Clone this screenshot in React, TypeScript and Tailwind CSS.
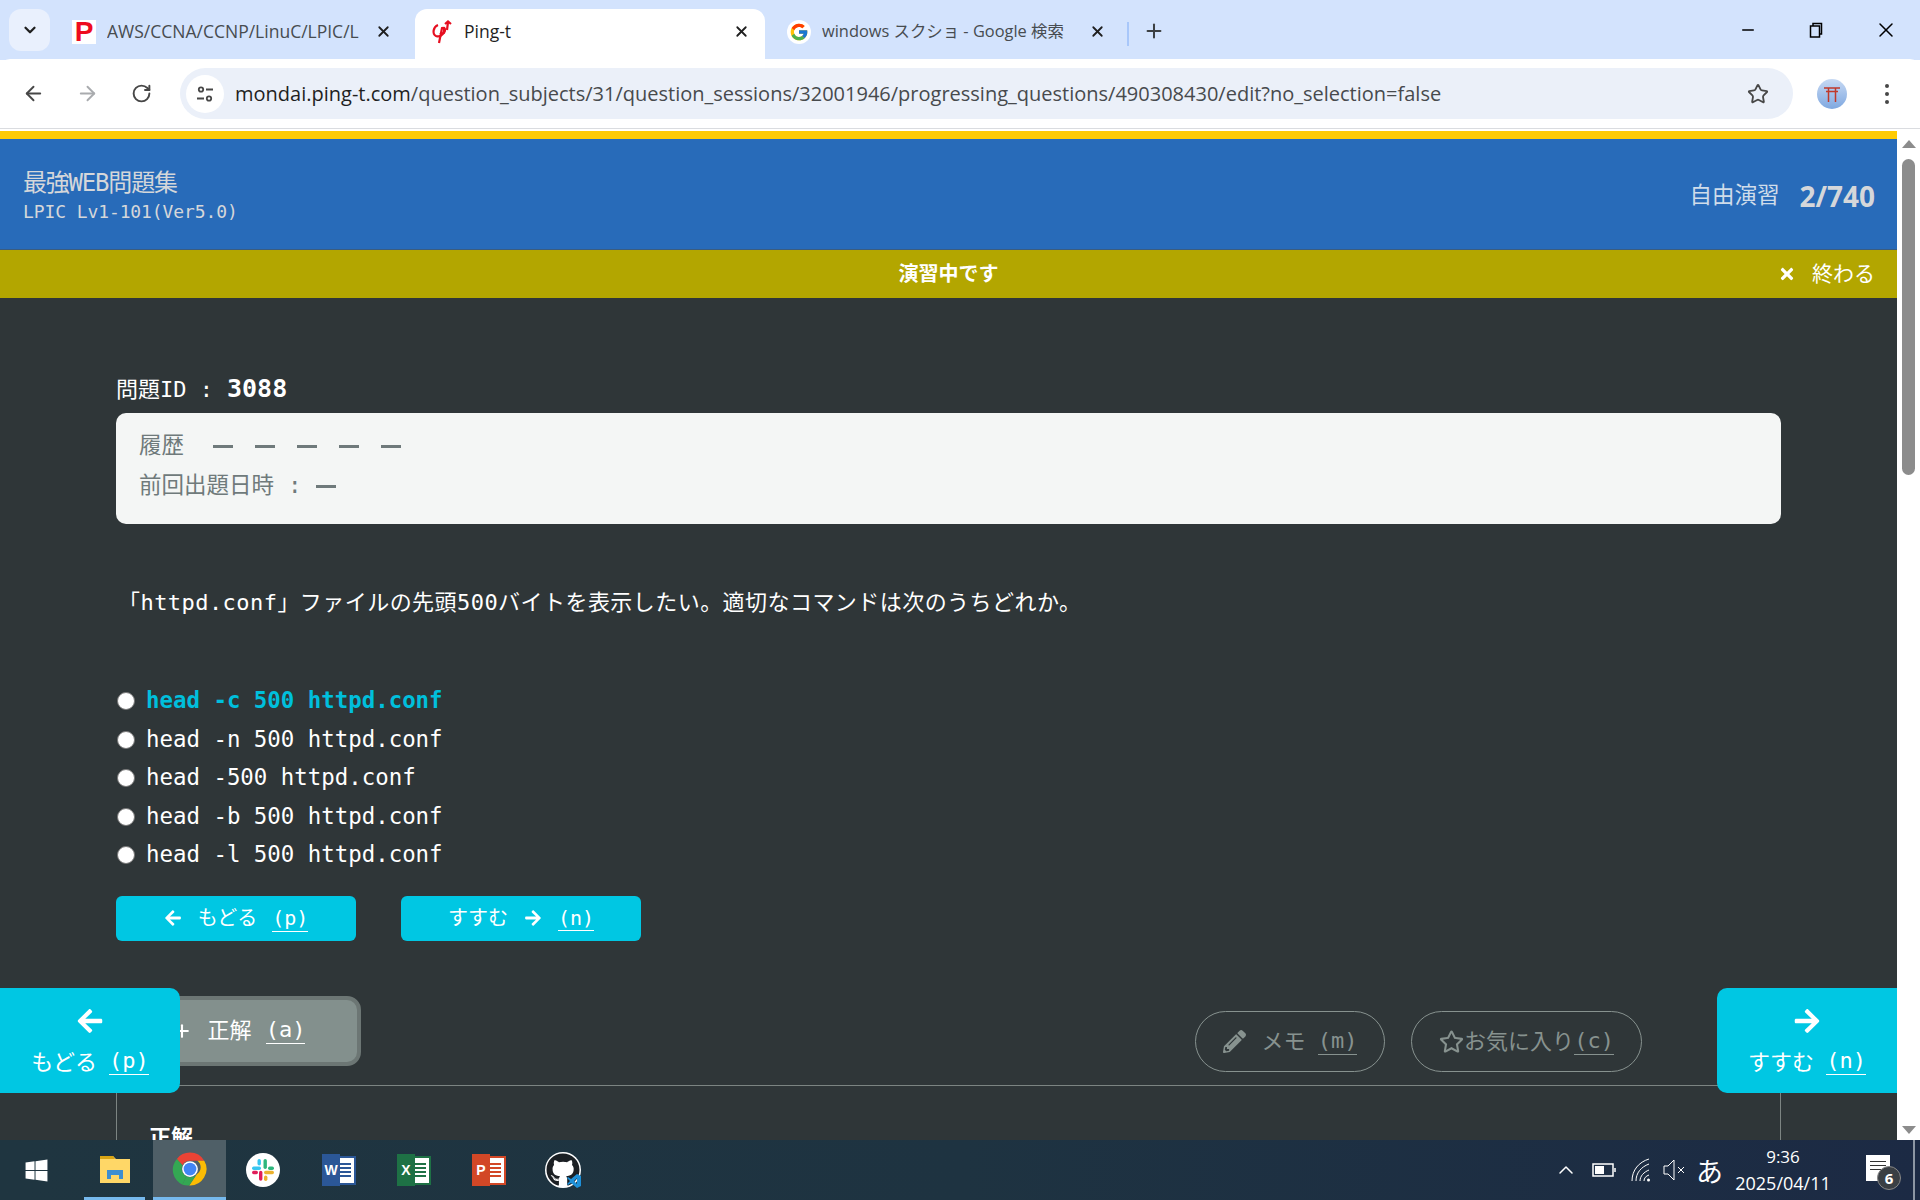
import { ArrowLeft, ArrowRight, ChevronDown, ChevronUp, Minus, Plus, RotateCw, Star, X } from 'lucide-react';
import { FaArrowLeft, FaArrowRight, FaGithub, FaPencilAlt, FaRegStar, FaTimes, FaWindows } from 'react-icons/fa';
import { FcGoogle } from 'react-icons/fc';

const ui = 'font-["Open_Sans","Noto_Sans_CJK_JP",sans-serif]';
const mono = 'font-["DejaVu_Sans_Mono","Noto_Sans_CJK_JP",monospace]';

const options = [
  'head -c 500 httpd.conf',
  'head -n 500 httpd.conf',
  'head -500 httpd.conf',
  'head -b 500 httpd.conf',
  'head -l 500 httpd.conf',
];

function ChromeLogo() {
  return (
    <svg viewBox="0 0 48 48" className="h-[36px] w-[36px]">
      <path d="M24 2a22 22 0 0 1 19 11H24a11 11 0 0 0-10 6L6.500 10.500A22 22 0 0 1 24 2z" fill="#ea4335" />
      <path d="M6.500 10.500 14 19a11 11 0 0 0 5 14.500L14 45A22 22 0 0 1 6.500 10.500z" fill="#34a853" transform="rotate(0 24 24)" />
      <path d="M43 13a22 22 0 0 1-20 33l10-15a11 11 0 0 0 1-18z" fill="#fbbc04" />
      <path d="M14 45l5-11.500a11 11 0 0 0 14-2.500L23 46a22 22 0 0 1-9-1z" fill="#34a853" />
      <circle cx="24" cy="24" r="10.500" fill="#fff" />
      <circle cx="24" cy="24" r="8.500" fill="#4285f4" />
    </svg>
  );
}

function SlackLogo() {
  return (
    <div className="flex h-[34px] w-[34px] items-center justify-center rounded-full bg-white">
      <svg viewBox="0 0 24 24" className="h-[24px] w-[24px]">
        <rect x="1" y="8.500" width="9" height="3.400" rx="1.700" fill="#36c5f0" />
        <rect x="6.500" y="1" width="3.400" height="6.500" rx="1.700" fill="#36c5f0" />
        <rect x="12.500" y="1" width="3.400" height="10" rx="1.700" fill="#2eb67d" />
        <rect x="17" y="8.500" width="6" height="3.400" rx="1.700" fill="#2eb67d" />
        <rect x="13" y="12.800" width="10" height="3.400" rx="1.700" fill="#ecb22e" />
        <rect x="13" y="17.500" width="3.400" height="5.500" rx="1.700" fill="#ecb22e" />
        <rect x="1" y="12.800" width="6" height="3.400" rx="1.700" fill="#e01e5a" />
        <rect x="8" y="12.800" width="3.400" height="10" rx="1.700" fill="#e01e5a" />
      </svg>
    </div>
  );
}

function OfficeIcon({ letter, color }: { letter: string; color: string }) {
  return (
    <div className="relative flex h-[32px] w-[32px] items-center">
      <div className="ml-auto flex h-[25px] w-[22px] flex-col justify-center gap-[2px] bg-white px-[3px]" style={{ outline: `2px solid ${color}` }}>
        <div className="h-[2px]" style={{ background: color }} />
        <div className="h-[2px]" style={{ background: color }} />
        <div className="h-[2px]" style={{ background: color }} />
        <div className="h-[2px]" style={{ background: color }} />
      </div>
      <div
        className="absolute top-0 left-0 flex h-[32px] w-[18px] items-center justify-center text-[14px] font-bold text-white font-['Liberation_Sans',sans-serif]"
        style={{ background: color }}
      >
        {letter}
      </div>
    </div>
  );
}

function Tab({ icon, title, width, text, active }: { icon: React.ReactNode; title: string; width: string; text: string; active?: boolean }) {
  return (
    <div className={`flex h-[51px] shrink-0 items-center pb-[6px] pl-[14px] ${width} ${active ? 'rounded-t-[12px] bg-white' : ''}`}>
      <div className="flex h-[24px] w-[24px] shrink-0 items-center justify-center">{icon}</div>
      <span className={`ml-[11px] min-w-0 flex-1 overflow-hidden whitespace-nowrap ${text} ${active ? 'text-[#1f1f1f]' : 'text-[#474c50]'}`}>{title}</span>
      <X size={17} strokeWidth={2.500} className="ml-[8px] shrink-0 text-[#1f1f1f]" />
    </div>
  );
}

function KeyHint({ k }: { k: string }) {
  return <span className={`border-b border-current leading-[26px] ${mono}`}>({k})</span>;
}

function Floating({ side, children }: { side: 'left' | 'right'; children: React.ReactNode }) {
  return (
    <div
      className={`absolute top-[859px] flex h-[105px] w-[180px] flex-col items-center justify-center gap-[10px] bg-[#00c7e3] pt-[4px] text-[22px] text-white ${
        side === 'left' ? 'left-0 rounded-r-[10px]' : 'right-[23px] rounded-l-[10px]'
      }`}
    >
      {children}
    </div>
  );
}

export default function App() {
  return (
    <div className={`flex h-[1200px] w-[1920px] flex-col overflow-hidden bg-white ${ui}`}>
      {/* Browser tabs */}
      <div className="flex h-[60px] shrink-0 items-end bg-[#d3e3fd] pl-[9px]">
        <div className="mb-[9px] flex h-[42px] w-[41px] items-center justify-center rounded-[12px] bg-[#e9f0fd]">
          <ChevronDown size={18} strokeWidth={3} className="text-[#1f1f1f]" />
        </div>
        <Tab
          width="ml-[8px] w-[352px] pr-[18px]"
          text="text-[17.500px]"
          title="AWS/CCNA/CCNP/LinuC/LPIC/L"
          icon={<div className="flex h-[24px] w-[24px] items-center justify-center bg-white text-[28px] leading-none font-bold text-[#ee0b1e] font-['Liberation_Sans',sans-serif]">P</div>}
        />
        <Tab
          active
          width="ml-[5px] w-[350px] pr-[15px]"
          text="text-[17.500px]"
          title="Ping-t"
          icon={
            <svg viewBox="0 0 24 24" className="h-[24px] w-[24px]" fill="none" stroke="#e60f20" strokeWidth="2.200">
              <path d="M9 5C4 7 3 14 7 16c5 2 9-3 8-9" />
              <path d="M10 23 13 8c3-1 4 2 2 5-1 1-3 1-4 0" />
              <path d="M18 10 19 2M16 4l3-2.500L22 4" />
            </svg>
          }
        />
        <Tab
          width="ml-[8px] w-[348px] pr-[15px]"
          text="text-[16.400px]"
          title="windows スクショ - Google 検索"
          icon={<div className="flex h-[24px] w-[24px] items-center justify-center rounded-full bg-white"><FcGoogle size={20} /></div>}
        />
        <div className="mb-[14px] ml-[6px] h-[24px] w-[2px] self-end bg-[#a8c7fa]" />
        <Plus size={22} strokeWidth={2.200} className="mb-[18px] ml-[14px] text-[#3c4043]" />
        <div className="ml-auto mb-[18px] flex items-center">
          <Minus size={18} strokeWidth={2} className="mr-[51px] text-black" />
          <svg viewBox="0 0 16 16" className="mr-[50px] h-[16px] w-[16px]" fill="none" stroke="#000" strokeWidth="1.500">
            <rect x="2.500" y="4" width="9" height="11" />
            <path d="M5 4V1.500h8.500V12H11.500" />
          </svg>
          <X size={24} strokeWidth={1.500} className="mr-[22px] text-black" />
        </div>
      </div>

      {/* Toolbar */}
      <div className="-mt-px flex h-[70px] shrink-0 items-center rounded-t-[10px] border-b border-[#dadce0] bg-white pl-[22px]">
        <ArrowLeft size={23} strokeWidth={2} className="text-[#474747]" />
        <ArrowRight size={23} strokeWidth={2} className="ml-[31px] text-[#a9abae]" />
        <RotateCw size={21} strokeWidth={2.200} className="ml-[32px] text-[#474747]" />
        <div className="ml-[28px] flex h-[51px] w-[1613px] items-center rounded-full bg-[#ebf0f9] pl-[6px]">
          <div className="flex h-[38px] w-[38px] items-center justify-center rounded-full bg-white">
            <svg viewBox="0 0 20 20" className="h-[20px] w-[20px]" fill="none" stroke="#474747" strokeWidth="1.800">
              <circle cx="6" cy="5.500" r="2.200" />
              <path d="M11 5.500h7M2 14.500h7" />
              <circle cx="14" cy="14.500" r="2.200" />
            </svg>
          </div>
          <span className="ml-[11px] text-[20px] whitespace-nowrap text-[#474a4d]">
            <span className="text-[#1f1f1f]">mondai.ping-t.com</span>/question_subjects/31/question_sessions/32001946/progressing_questions/490308430/edit?no_selection=false
          </span>
          <Star size={22} strokeWidth={2} className="mr-[24px] ml-auto shrink-0 text-[#474747]" />
        </div>
        <div className="relative ml-[24px] flex h-[30px] w-[30px] items-center justify-center overflow-hidden rounded-full bg-gradient-to-b from-[#c7d9f3] to-[#7fa8e0]">
          <svg viewBox="0 0 20 20" className="h-[20px] w-[20px]" fill="none" stroke="#c0392b" strokeWidth="1.500">
            <path d="M2 4h16M4 7.500h12M6.500 4v14M13.500 4v14" />
          </svg>
        </div>
        <div className="ml-[38px] flex flex-col gap-[4px]">
          <div className="h-[4px] w-[4px] rounded-full bg-[#474747]" />
          <div className="h-[4px] w-[4px] rounded-full bg-[#474747]" />
          <div className="h-[4px] w-[4px] rounded-full bg-[#474747]" />
        </div>
      </div>

      {/* Page viewport */}
      <div className="relative flex min-h-0 flex-1 bg-white pt-[2px]">
        <div className="flex min-w-0 flex-1 flex-col overflow-hidden">
          <div className="h-[8px] shrink-0 bg-[#ffcb05]" />
          <header className={`flex h-[111px] shrink-0 items-center justify-between border-b border-[#3a5c80] bg-[#286bb9] pr-[22px] pl-[23px] ${mono}`}>
            <div className="mt-[2px] text-[#d5d7da]">
              <div className="text-[24px] leading-[34px] tracking-[-1.200px]">最強WEB問題集</div>
              <div className="text-[18px] leading-[24px] tracking-[-0.100px]">LPIC Lv1-101(Ver5.0)</div>
            </div>
            <div className="mt-[4px] flex items-center text-[#d5d7da]">
              <span className="text-[22.500px] text-[#cfdcea]">自由演習</span>
              <span className={`ml-[20px] text-[28px] font-bold ${ui}`}>2/740</span>
            </div>
          </header>
          <div className="relative flex h-[48px] shrink-0 items-center justify-center bg-[#b3a600] text-white">
            <span className="text-[20px] font-bold">演習中です</span>
            <div className="absolute right-[22px] flex items-center gap-[16px] text-[21px]">
              <FaTimes size={18} />
              <span>終わる</span>
            </div>
          </div>

          <main className={`min-h-0 flex-1 overflow-hidden bg-[#2f3638] px-[116px] text-white ${mono}`}>
            <div className="mt-[76px] flex h-[30px] items-center text-[22px]">
              問題ID :<span className="ml-[14px] text-[25px] font-bold">3088</span>
            </div>
            <div className="mt-[9px] h-[111px] rounded-[10px] bg-[#f4f6f5] pt-[13px] pl-[23px] text-[22.500px] text-[#6f7a7b]">
              <div className="flex h-[40px] items-center">
                履歴
                <div className="ml-[29px] flex gap-[22px]">
                  {[0, 1, 2, 3, 4].map((i) => (
                    <div key={i} className="h-[3px] w-[20px] bg-[#6f7a7b]" />
                  ))}
                </div>
              </div>
              <div className="flex h-[40px] items-center">
                前回出題日時
                <span className="ml-[14px]">:</span>
                <div className="ml-[14px] h-[3px] w-[20px] bg-[#6f7a7b]" />
              </div>
            </div>

            <p className="mt-[64px] pl-[2px] text-[22px] leading-[30px] tracking-[0.450px] whitespace-nowrap">
              「httpd.conf」ファイルの先頭500バイトを表示したい。適切なコマンドは次のうちどれか。
            </p>

            <div className="mt-[64px] flex flex-col">
              {options.map((o, i) => (
                <div key={o} className="flex h-[38.500px] items-center">
                  <div className="ml-[1px] h-[18px] w-[18px] rounded-full border border-[#777] bg-white" />
                  <span className={`ml-[11px] text-[22.400px] ${i === 0 ? 'font-bold text-[#00bfdc]' : 'text-white'}`}>{o}</span>
                </div>
              ))}
            </div>

            <div className="mt-[21px] flex gap-[45px]">
              <div className="flex h-[45px] w-[240px] items-center justify-center rounded-[6px] bg-[#00c7e3] text-[20px]">
                <FaArrowLeft size={18} />
                <span className="ml-[16px] mr-[15px]">もどる</span>
                <KeyHint k="p" />
              </div>
              <div className="flex h-[45px] w-[240px] items-center justify-center rounded-[6px] bg-[#00c7e3] text-[20px]">
                <span className="mr-[16px]">すすむ</span>
                <FaArrowRight size={18} />
                <span className="ml-[16px]"><KeyHint k="n" /></span>
              </div>
            </div>

            <div className="mt-[55px] flex items-start justify-between pr-[139px]">
              <div className="flex h-[70px] w-[245px] items-center justify-center rounded-[14px] border-[4px] border-[#6c7674] bg-[#83908d] text-[22px]">
                <Plus size={20} strokeWidth={2.500} className="mr-[16px]" />
                <span className="mr-[14px]">正解</span>
                <KeyHint k="a" />
              </div>
              <div className="mt-[15px] flex gap-[26px] text-[22px] text-[#87928f]">
                <div className="flex h-[61px] w-[190px] items-center justify-center rounded-full border border-[#87928f]">
                  <FaPencilAlt size={23} />
                  <span className="mr-[12px] ml-[16px]">メモ</span>
                  <KeyHint k="m" />
                </div>
                <div className="flex h-[61px] w-[231px] items-center justify-center rounded-full border border-[#87928f]">
                  <FaRegStar size={25} />
                  <span>お気に入り</span>
                  <KeyHint k="c" />
                </div>
              </div>
            </div>

            <div className="mt-[13px] h-[100px] border-x border-t border-[#7c8482] pt-[35px] pl-[32px] text-[22px] font-bold">正解</div>
          </main>
        </div>

        {/* Scrollbar */}
        <div className="flex w-[23px] shrink-0 flex-col items-center bg-white pt-[9px]">
          <div className="h-0 w-0 border-x-[7px] border-b-[8px] border-x-transparent border-b-[#8c8c8c]" />
          <div className="mt-[11px] h-[316px] w-[13px] rounded-full bg-[#8c8c8c]" />
          <div className="mt-auto mb-[6px] h-0 w-0 border-x-[7px] border-t-[8px] border-x-transparent border-t-[#8c8c8c]" />
        </div>

        <Floating side="left">
          <FaArrowLeft size={28} />
          <div className="flex items-center gap-[12px]">
            <span>もどる</span>
            <KeyHint k="p" />
          </div>
        </Floating>
        <Floating side="right">
          <FaArrowRight size={28} />
          <div className="flex items-center gap-[12px]">
            <span>すすむ</span>
            <KeyHint k="n" />
          </div>
        </Floating>
      </div>

      {/* Windows taskbar */}
      <footer className="flex h-[60px] shrink-0 items-center bg-gradient-to-r from-[#1f3540] via-[#1e3341] to-[#1c2a44] text-white">
        <FaWindows size={25} className="ml-[24px]" />
        <div className="relative ml-[35px] flex h-[60px] w-[61px] items-center justify-center border-b-[3px] border-[#76b9ed]">
          <svg viewBox="0 0 32 32" className="h-[32px] w-[32px]">
            <path d="M1 3h13l3 3h14v24H1z" fill="#ffd767" />
            <path d="M1 3h13l2 3H1z" fill="#d9a514" />
            <path d="M8 26v-9h16v9h-4v-4h-8v4z" fill="#3e8ed0" />
          </svg>
        </div>
        <div className="ml-[8px] flex h-[60px] w-[73px] items-center justify-center border-b-[3px] border-[#76b9ed] bg-[#4f5f67]">
          <ChromeLogo />
        </div>
        <div className="ml-[20px]"><SlackLogo /></div>
        <div className="ml-[42px]"><OfficeIcon letter="W" color="#2b5797" /></div>
        <div className="ml-[43px]"><OfficeIcon letter="X" color="#1e7145" /></div>
        <div className="ml-[43px]"><OfficeIcon letter="P" color="#d24726" /></div>
        <div className="relative ml-[41px] flex h-[36px] w-[36px] items-center justify-center rounded-full bg-white">
          <FaGithub size={34} className="text-[#1b1f23]" />
          <svg viewBox="0 0 16 16" className="absolute -right-[1px] -bottom-[1px] h-[16px] w-[16px]" fill="#1e90d8">
            <path d="M11 1 15 3v10l-4 2-6-5-3 2-1-1 3-3-3-3 1-1 3 2zM11 5 8 8l3 3z" />
          </svg>
        </div>

        <div className="ml-auto flex items-center">
          <ChevronUp size={24} strokeWidth={1.500} />
          <svg viewBox="0 0 24 16" className="ml-[14px] h-[16px] w-[24px]" fill="none" stroke="#fff" strokeWidth="1.500">
            <rect x="1" y="2" width="20" height="12" />
            <rect x="3" y="4" width="9" height="8" fill="#fff" stroke="none" />
            <path d="M23 6v4" />
          </svg>
          <svg viewBox="0 0 20 24" className="ml-[15px] h-[24px] w-[20px]" fill="none" stroke="#fff" strokeWidth="1">
            <path d="M1 23C1 12 8 4 18 1M5 23C5 15 10 9 18 6M9 23c0-5 4-9 9-11M13 23c0-3 2-5 5-6" />
            <circle cx="17.500" cy="22" r="1.500" fill="#fff" stroke="none" />
          </svg>
          <svg viewBox="0 0 22 24" className="ml-[12px] h-[24px] w-[22px]" fill="none" stroke="#fff" strokeWidth="1">
            <path d="M1 8h4l6-6v20l-6-6H1z" />
            <path d="m15 9 6 6M21 9l-6 6" />
          </svg>
          <span className="ml-[11px] text-[27px] leading-none font-['Noto_Sans_CJK_JP',sans-serif]">あ</span>
          <div className="ml-[10px] flex w-[100px] flex-col items-center text-[18px] leading-[27px]">
            <span className="text-[17px]">9:36</span>
            <span>2025/04/11</span>
          </div>
          <div className="relative mr-[18px] ml-[30px] h-[34px] w-[32px]">
            <div className="absolute top-[2px] left-[3px] flex h-[26px] w-[24px] flex-col gap-[3px] bg-white px-[4px] pt-[6px]">
              <div className="h-[1px] bg-[#333]" />
              <div className="h-[1px] bg-[#333]" />
              <div className="h-[1px] bg-[#333]" />
            </div>
            <div className="absolute top-[13px] left-[14px] flex h-[24px] w-[24px] items-center justify-center rounded-full border border-[#888] bg-[#3a3f44] text-[15px] font-bold">6</div>
          </div>
          <div className="h-[60px] w-[2px] bg-[#8c96a3]" />
          <div className="w-[5px]" />
        </div>
      </footer>
    </div>
  );
}
